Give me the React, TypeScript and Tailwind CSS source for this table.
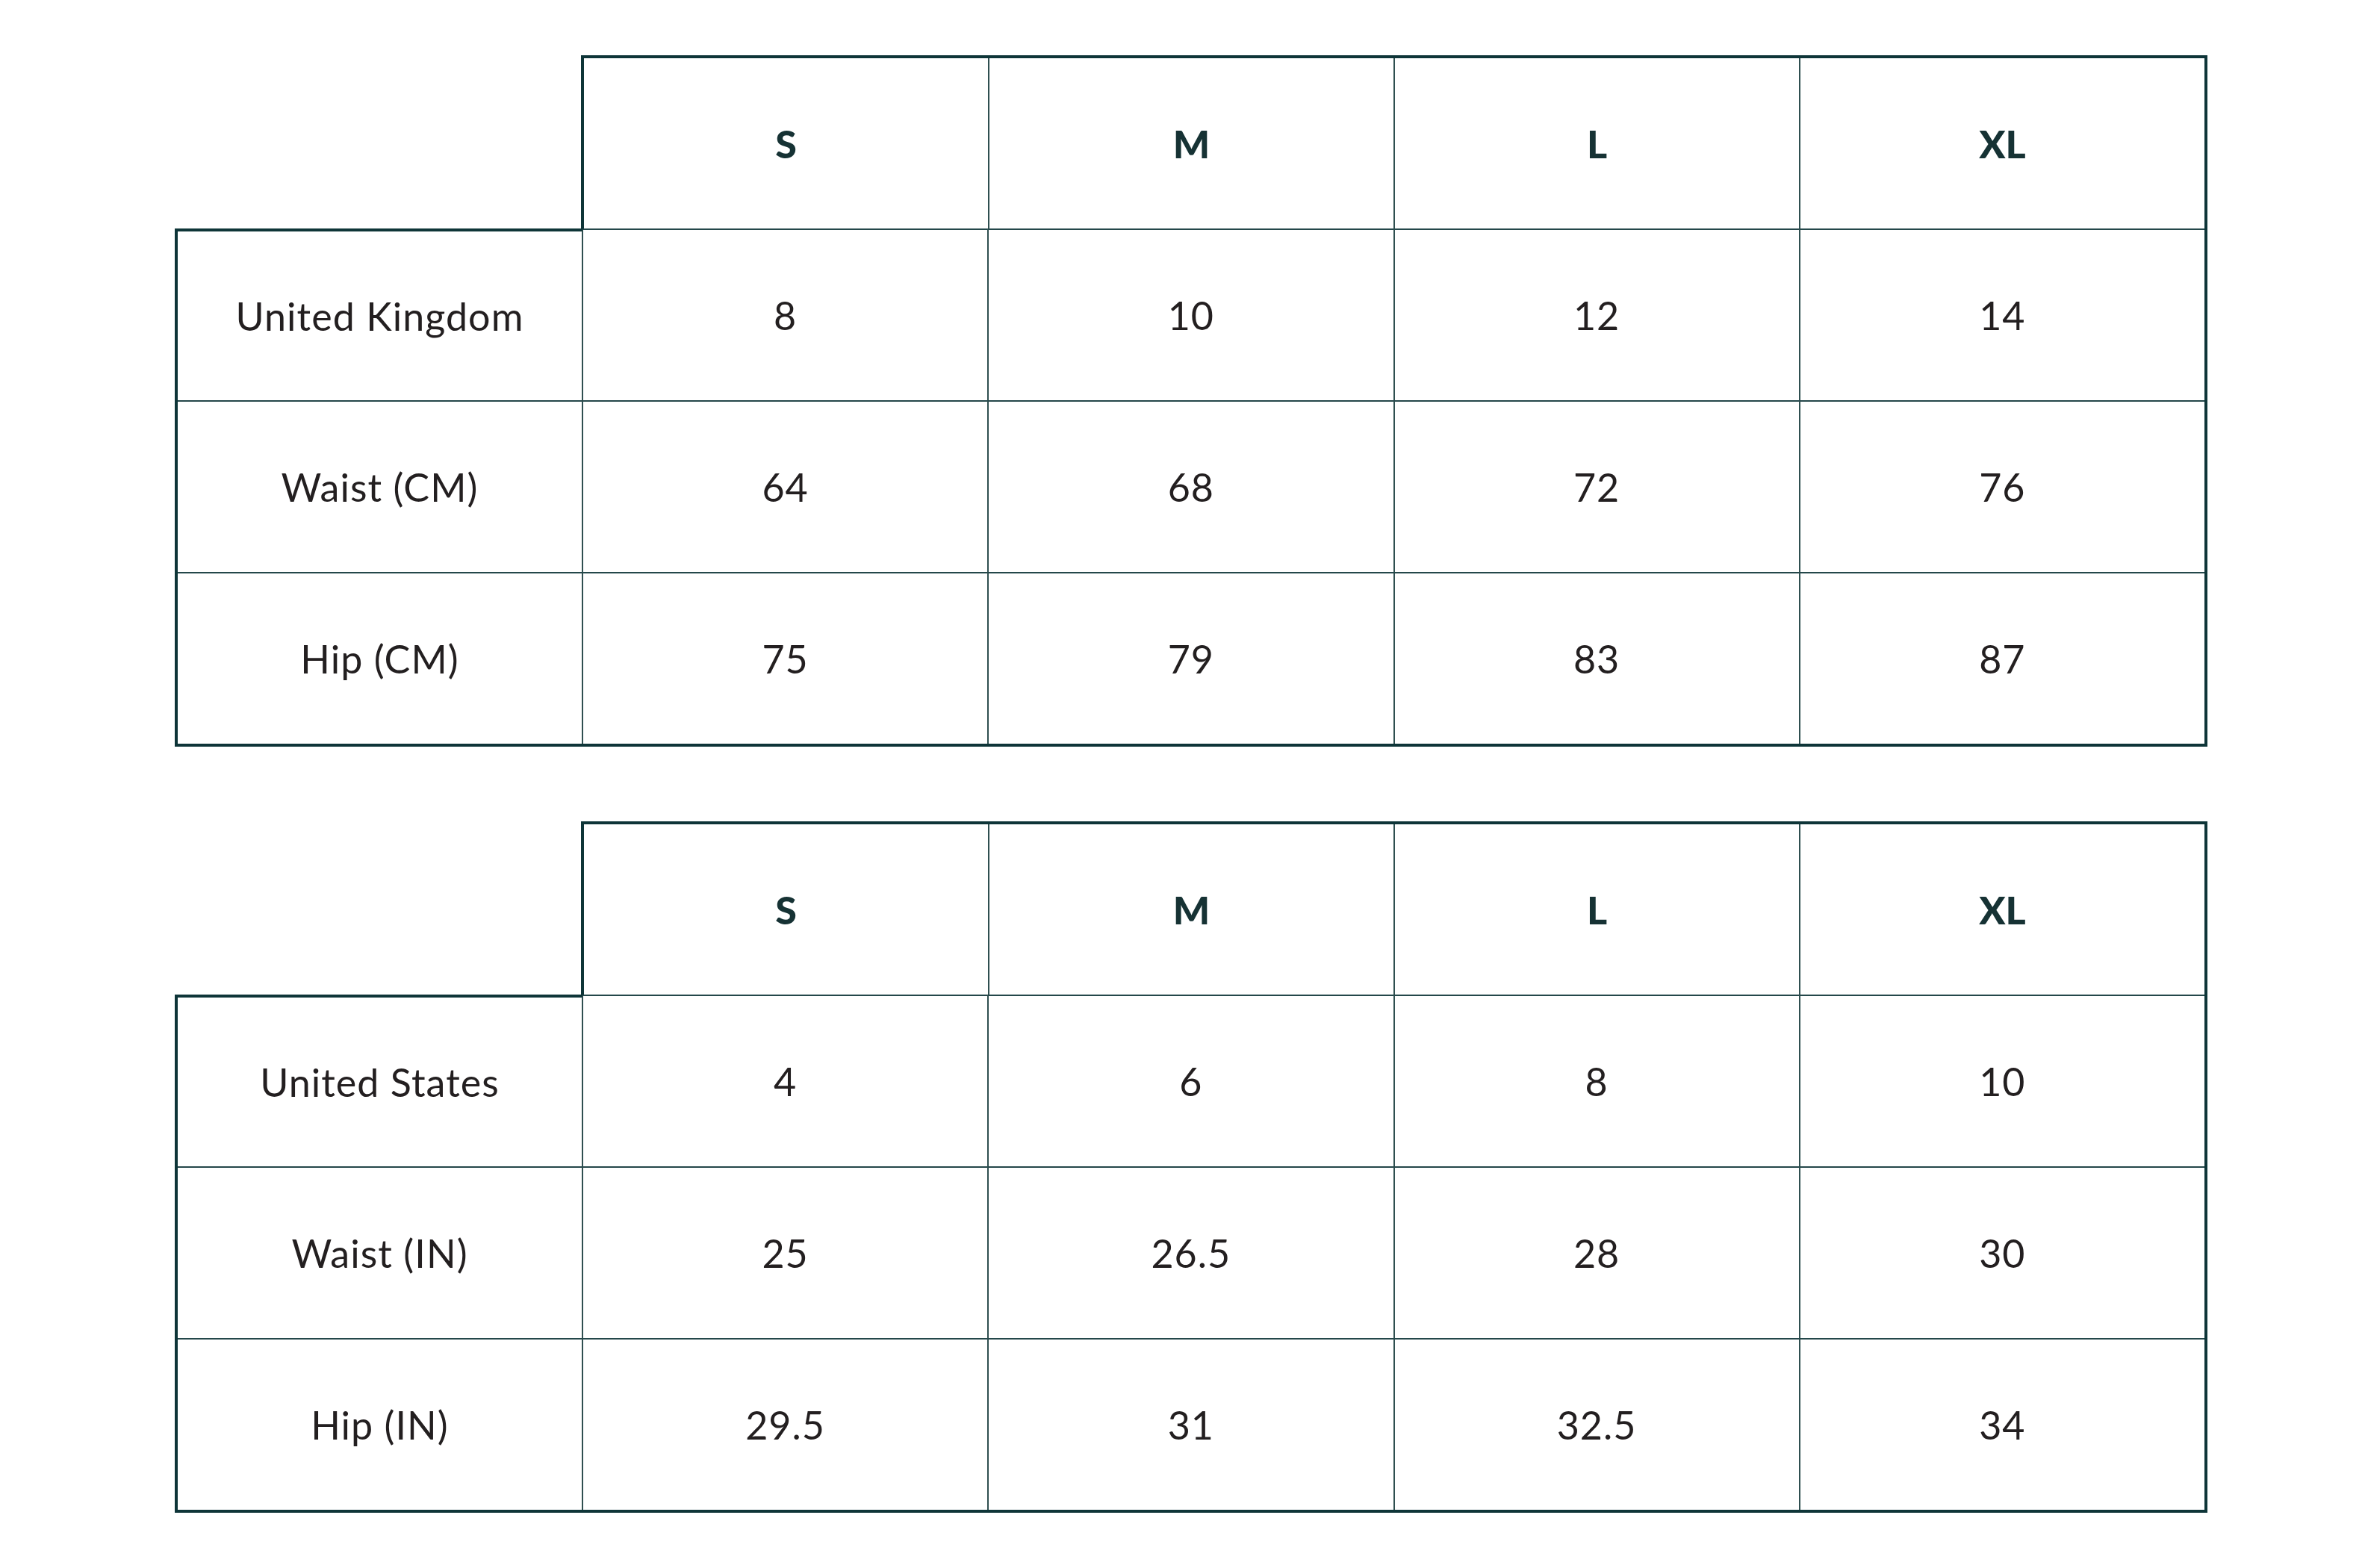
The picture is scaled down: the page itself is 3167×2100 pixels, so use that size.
const sizes = ['S', 'M', 'L', 'XL']

type Row = { label: string; values: string[] }

const ukRows: Row[] = [
  { label: 'United Kingdom', values: ['8', '10', '12', '14'] },
  { label: 'Waist (CM)', values: ['64', '68', '72', '76'] },
  { label: 'Hip (CM)', values: ['75', '79', '83', '87'] },
]

const usRows: Row[] = [
  { label: 'United States', values: ['4', '6', '8', '10'] },
  { label: 'Waist (IN)', values: ['25', '26.5', '28', '30'] },
  { label: 'Hip (IN)', values: ['29.5', '31', '32.5', '34'] },
]

function SizeTable({ rows }: { rows: Row[] }) {
  return (
    <div className="flex flex-col w-[2722px]">
      {/* Size header */}
      <div className="flex">
        <div className="w-[544px] shrink-0" />
        <div className="flex flex-1 border-4 border-b-0 border-[#0e3538]">
          {sizes.map((s, i) => (
            <div
              key={s}
              className={
                'flex-1 h-[228px] flex items-center justify-center text-[52px] font-black text-[#163234] ' +
                (i > 0 ? 'border-l-2 border-[#2f4f50]' : '')
              }
            >
              {s}
            </div>
          ))}
        </div>
      </div>

      {/* Rows */}
      <div className="flex flex-col border-4 border-t-0 border-[#0e3538]">
        {rows.map((row, r) => (
          <div key={row.label} className="flex h-[230px]">
            <div
              className={
                'w-[543px] shrink-0 flex items-center justify-center border-r-2 border-r-[#2f4f50] text-[52px] tracking-[0.02em] text-[#231f20] ' +
                (r === 0 ? 'border-t-4 border-t-[#0e3538]' : 'border-t-2 border-t-[#24474a]')
              }
            >
              {row.label}
            </div>
            {row.values.map((v, i) => (
              <div
                key={i}
                className={
                  'flex-1 flex items-center justify-center border-t-2 border-t-[#24474a] text-[52px] tracking-[0.02em] text-[#231f20] ' +
                  (i > 0 ? 'border-l-2 border-l-[#2f4f50]' : '')
                }
              >
                {v}
              </div>
            ))}
          </div>
        ))}
      </div>
    </div>
  )
}

export default function App() {
  return (
    <div className="min-h-screen w-full bg-white font-['Lato','Noto_Sans',sans-serif] pt-[74px] pl-[234px]">
      <div className="flex flex-col gap-[100px]">
        <SizeTable rows={ukRows} />
        <SizeTable rows={usRows} />
      </div>
    </div>
  )
}
